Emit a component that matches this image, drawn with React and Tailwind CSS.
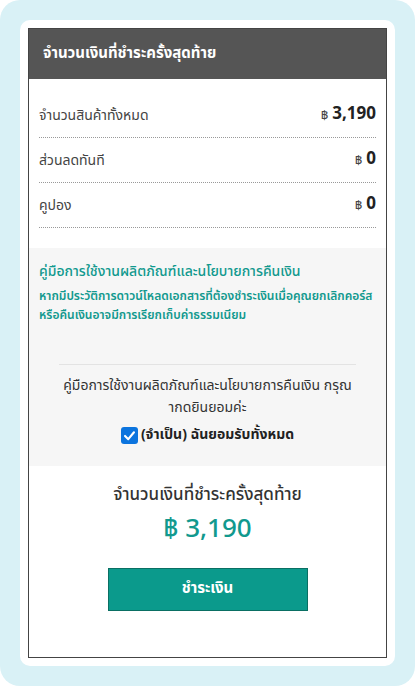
export default function App() {
  const font = { fontFamily: '"Noto Sans Thai", "Noto Sans", "Liberation Sans", sans-serif' };
  return (
    <div className="w-[415px] h-[686px] bg-white" style={font}>
      <div className="w-[415px] h-[686px] bg-[#d9f1f6] rounded-[20px] p-[20px]">
        <div className="bg-white rounded-[10px] p-[8px]">
          <div className="border border-[#444] flex flex-col">
            <div className="h-[50px] bg-[#555555] flex items-center px-[14px]">
              <span className="text-white font-bold text-[15px]">จำนวนเงินที่ชำระครั้งสุดท้าย</span>
            </div>
            <div className="px-[10px] pt-[14px] pb-[20px]">
              {[
                ["จำนวนสินค้าทั้งหมด", "3,190"],
                ["ส่วนลดทันที", "0"],
                ["คูปอง", "0"],
              ].map(([l, v]) => (
                <div key={l} className="h-[45px] flex items-center justify-between border-b border-dotted border-[#999]">
                  <span className="text-[14px] text-[#444]">{l}</span>
                  <span className="flex items-baseline gap-[4px]">
                    <span className="text-[13px] text-[#444]">฿</span>
                    <span className="text-[17px] font-bold text-[#222]">{v}</span>
                  </span>
                </div>
              ))}
            </div>
            <div className="bg-[#f6f6f6] px-[10px] pt-[14px] pb-[20px]">
              <div className="text-[14px] leading-[20px] text-[#11998e] font-medium">คู่มือการใช้งานผลิตภัณฑ์และนโยบายการคืนเงิน</div>
              <div className="mt-[5px] text-[12px] leading-[19px] text-[#11998e] font-semibold">
                หากมีประวัติการดาวน์โหลดเอกสารที่ต้องชำระเงินเมื่อคุณยกเลิกคอร์ส<br />หรือคืนเงินอาจมีการเรียกเก็บค่าธรรมเนียม
              </div>
              <div className="mt-[39px] mx-[20px] border-t border-[#e3e3e3]" />
              <div className="mt-[10px] text-center text-[14px] leading-[22px] text-[#333] px-[20px]">
                คู่มือการใช้งานผลิตภัณฑ์และนโยบายการคืนเงิน กรุณ<br />ากดยินยอมค่ะ
              </div>
              <div className="mt-[5px] flex items-center justify-center gap-[3px]">
                <span className="w-[17px] h-[17px] rounded-[3px] bg-[#0b74de] flex items-center justify-center">
                  <svg width="13" height="13" viewBox="0 0 16 16" fill="none">
                    <path d="M2.5 8.5 L6.5 12.5 L13.5 4" stroke="white" strokeWidth="2.6" strokeLinecap="round" strokeLinejoin="round" />
                  </svg>
                </span>
                <span className="text-[14px] leading-[22px] font-bold text-[#222]">(จำเป็น) ฉันยอมรับทั้งหมด</span>
              </div>
            </div>
            <div className="flex flex-col items-center pt-[17px] pb-[46px]">
              <div className="text-[17px] leading-[24px] text-[#333] font-medium">จำนวนเงินที่ชำระครั้งสุดท้าย</div>
              <div className="mt-[2px] text-[26px] leading-[40px] text-[#11998e] font-medium">฿ 3,190</div>
              <button className="mt-[19px] w-[200px] h-[43px] bg-[#0b9a8c] border border-[#0a6f63] text-white font-bold text-[15px]">ชำระเงิน</button>
            </div>
          </div>
        </div>
      </div>
    </div>
  );
}
